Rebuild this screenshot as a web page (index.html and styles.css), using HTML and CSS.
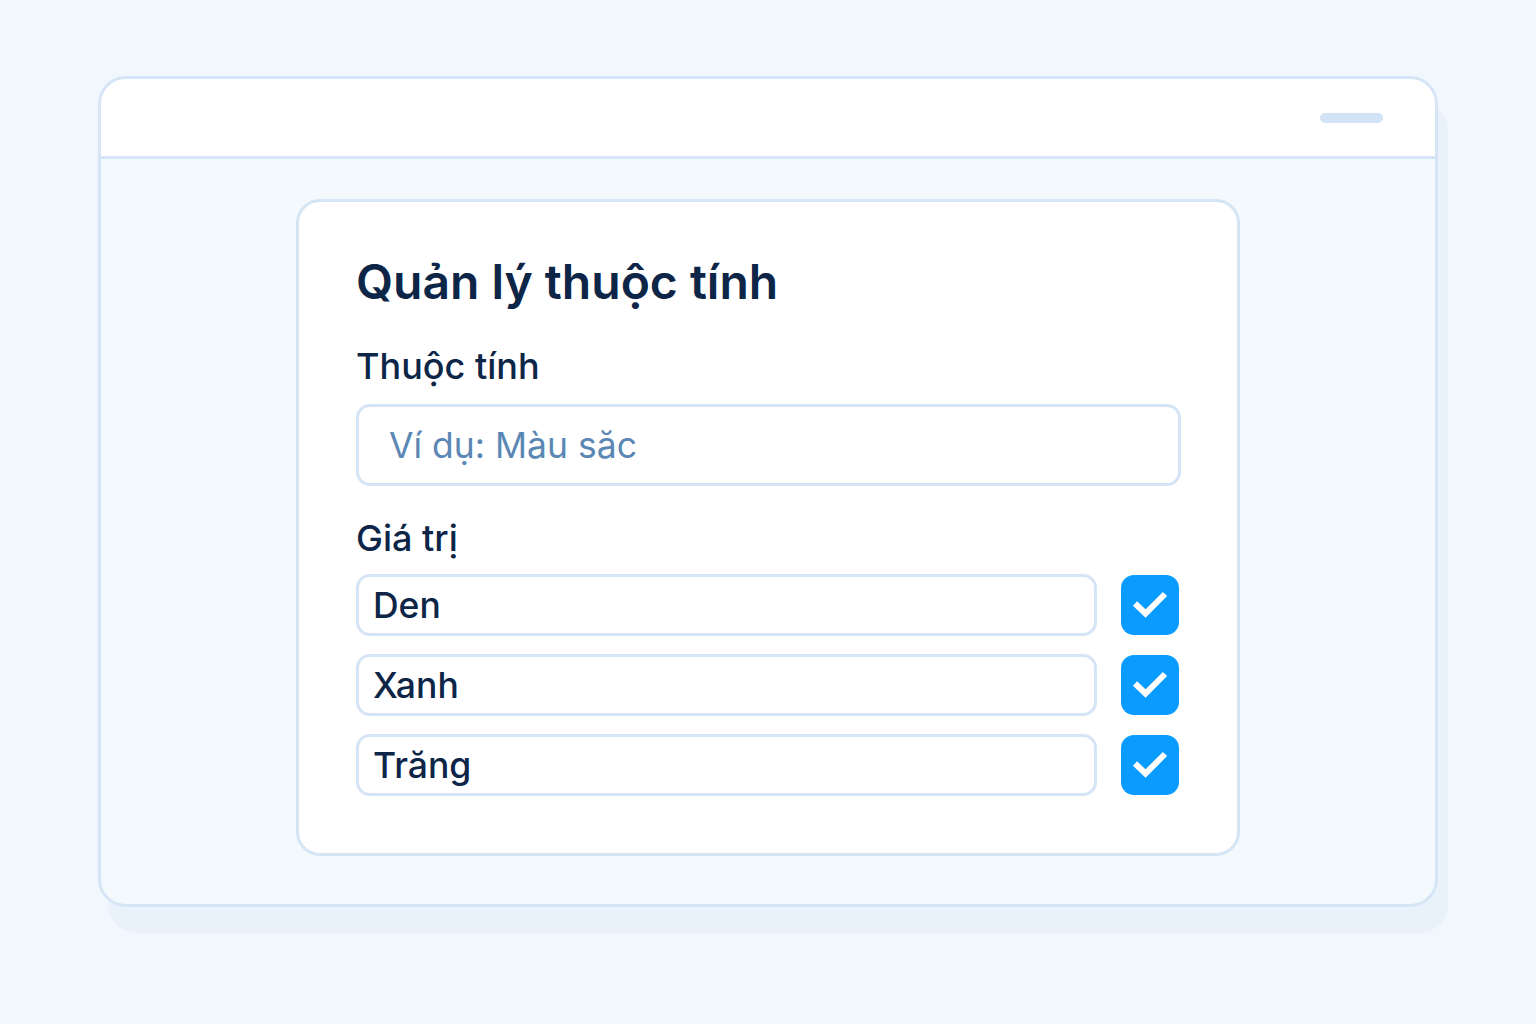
FILE: index.html
```html
<!DOCTYPE html>
<html lang="vi">
<head>
    <meta charset="UTF-8">
    <title>Quản lý thuộc tính</title>
    <link rel="stylesheet" href="styles.css">
</head>
<body>
    <div class="window">
        <div class="window-bar">
            <span class="bar-pill"></span>
        </div>
        <div class="window-body">
            <div class="card">
                <h1 class="card-title">Quản lý thuộc tính</h1>

                <label class="field-label">Thuộc tính</label>
                <input class="attr-input" placeholder="Ví dụ: Màu săc" name="attribute" />

                <label class="field-label values-label">Giá trị</label>
                <div class="value-list">
                    <div class="value-row">
                        <input class="value-input" value="Den" />
                        <span class="check">
                            <svg viewBox="0 0 58 60" width="58" height="60"><path d="M14 28.5l10.5 10L44 19" fill="none" stroke="#fff" stroke-width="6"/></svg>
                        </span>
                    </div>
                    <div class="value-row">
                        <input class="value-input" value="Xanh" />
                        <span class="check">
                            <svg viewBox="0 0 58 60" width="58" height="60"><path d="M14 28.5l10.5 10L44 19" fill="none" stroke="#fff" stroke-width="6"/></svg>
                        </span>
                    </div>
                    <div class="value-row">
                        <input class="value-input" value="Trăng" />
                        <span class="check">
                            <svg viewBox="0 0 58 60" width="58" height="60"><path d="M14 28.5l10.5 10L44 19" fill="none" stroke="#fff" stroke-width="6"/></svg>
                        </span>
                    </div>
                </div>
            </div>
        </div>
    </div>
</body>
</html>
```

FILE: styles.css
```css
* {
    box-sizing: border-box;
    font-family: Inter, "Noto Sans", sans-serif;
}

body {
    margin: 0;
    background: #f1f7fd;
    height: 1024px;
    overflow: hidden;
}

.window {
    width: 1340px;
    height: 831px;
    margin: 76px auto 0;
    border: 3px solid #d5e5f6;
    border-radius: 28px;
    background: #f4f9fe;
    box-shadow: 10px 26px 0 0 #e9f1fb;
    overflow: hidden;
}

.window-bar {
    height: 80px;
    background: #fff;
    border-bottom: 3px solid #d5e5f6;
    display: flex;
    align-items: center;
    justify-content: flex-end;
    padding-right: 52px;
}

.bar-pill {
    width: 63px;
    height: 10px;
    border-radius: 5px;
    background: #d2e3f5;
}

.window-body {
    padding-top: 40px;
    display: flex;
    justify-content: center;
}

.card {
    width: 944px;
    height: 657px;
    background: #fff;
    border: 3px solid #d5e5f6;
    border-radius: 24px;
    padding: 50px 56px 0 57px;
    display: flex;
    flex-direction: column;
}

.card-title {
    margin: 0;
    font-size: 48px;
    font-weight: 600;
    color: #0d2547;
    line-height: 60px;
}

.field-label {
    font-size: 36px;
    font-weight: 500;
    color: #0d2547;
    line-height: 44px;
    margin-top: 32px;
}

.attr-input {
    margin-top: 16px;
    height: 82px;
    border: 3px solid #d5e5f6;
    border-radius: 14px;
    padding: 0 30px;
    font-size: 35.5px;
    color: #0d2547;
    outline: none;
}

.attr-input::placeholder {
    color: #5a87b4;
}

.values-label {
    margin-top: 30px;
}

.value-list {
    margin-top: 14px;
    display: flex;
    flex-direction: column;
    gap: 18px;
}

.value-row {
    display: flex;
    align-items: center;
    gap: 24px;
}

.value-input {
    width: 741px;
    height: 62px;
    border: 3px solid #d5e5f6;
    border-radius: 14px;
    padding: 0 14px;
    font-size: 35.5px;
    font-weight: 500;
    color: #0d2547;
    outline: none;
}

.check {
    width: 58px;
    height: 60px;
    border-radius: 13px;
    background: #0a9bff;
    display: flex;
}
```
